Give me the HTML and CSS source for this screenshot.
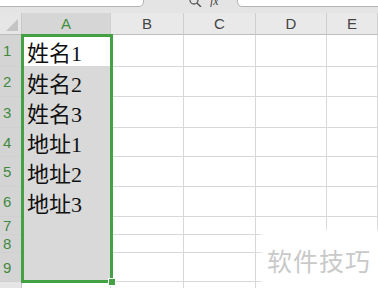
FILE: index.html
```html
<!DOCTYPE html>
<html lang="zh-CN">
<head>
    <meta charset="UTF-8">
    <title>表格</title>
    <link rel="stylesheet" href="styles.css">
</head>
<body>
    <div class="sheet">
        <div class="toolbar">
            <div class="namebox">A1</div>
            <div class="tools">
                <svg width="16" height="8" viewBox="0 0 16 8"><circle cx="6" cy="0" r="4" fill="none" stroke="#555" stroke-width="1.3"/><path d="M9 3 L13 7" stroke="#555" stroke-width="1.5"/></svg>
                <span class="fx">fx</span>
            </div>
            <div class="formula">姓名1</div>
        </div>

        <div class="grid">
            <div class="corner"><span class="tri"></span></div>
            <div class="colhead sel">A</div>
            <div class="colhead">B</div>
            <div class="colhead">C</div>
            <div class="colhead">D</div>
            <div class="colhead">E</div>

            <div class="rowhead sel">1</div><div class="cell active">姓名1</div><div class="cell"></div><div class="cell"></div><div class="cell"></div><div class="cell"></div>
            <div class="rowhead sel">2</div><div class="cell picked">姓名2</div><div class="cell"></div><div class="cell"></div><div class="cell"></div><div class="cell"></div>
            <div class="rowhead sel">3</div><div class="cell picked">姓名3</div><div class="cell"></div><div class="cell"></div><div class="cell"></div><div class="cell"></div>
            <div class="rowhead sel">4</div><div class="cell picked">地址1</div><div class="cell"></div><div class="cell"></div><div class="cell"></div><div class="cell"></div>
            <div class="rowhead sel">5</div><div class="cell picked">地址2</div><div class="cell"></div><div class="cell"></div><div class="cell"></div><div class="cell"></div>
            <div class="rowhead sel">6</div><div class="cell picked">地址3</div><div class="cell"></div><div class="cell"></div><div class="cell"></div><div class="cell"></div>
            <div class="rowhead sel">7</div><div class="cell picked"></div><div class="cell"></div><div class="cell"></div><div class="cell"></div><div class="cell"></div>
            <div class="rowhead sel">8</div><div class="cell picked"></div><div class="cell"></div><div class="cell"></div><div class="cell"></div><div class="cell"></div>
            <div class="rowhead sel">9</div><div class="cell picked"></div><div class="cell"></div><div class="cell"></div><div class="cell"></div><div class="cell"></div>
            <div class="rowhead">10</div><div class="cell"></div><div class="cell"></div><div class="cell"></div><div class="cell"></div><div class="cell"></div>

            <div class="selection"><span class="handle"></span></div>
        </div>

        <div class="watermark">软件技巧</div>
    </div>
</body>
</html>
```

FILE: styles.css
```css
body {
    margin: 0;
    background-color: #ffffff;
    font-family: "Liberation Sans", "Noto Sans CJK SC", sans-serif;
    overflow: hidden;
}
.sheet {
    position: relative;
    width: 378px;
    height: 288px;
    overflow: hidden;
}
.toolbar {
    height: 13px;
    background-color: #e4e4e4;
    display: flex;
    align-items: flex-end;
    overflow: hidden;
}
.namebox {
    width: 150px;
    height: 20px;
    margin: -7px 0 6px -6px;
    box-sizing: border-box;
    background-color: #ffffff;
    border: 1px solid #b4b4b4;
    border-radius: 0 0 5px 5px;
    padding-right: 20px;
    text-align: center;
    font-size: 14px;
    line-height: 12px;
    color: #333333;
}
.tools {
    display: flex;
    align-items: flex-start;
    gap: 6px;
    margin: 0 0 6px 44px;
    height: 7px;
    overflow: hidden;
    align-self: flex-start;
}
.fx {
    font-family: "Liberation Serif", serif;
    font-style: italic;
    font-size: 12px;
    line-height: 2px;
    color: #444444;
}
.formula {
    flex: 1;
    height: 20px;
    margin: -7px -6px 6px 18px;
    box-sizing: border-box;
    background-color: #ffffff;
    border: 1px solid #b4b4b4;
    border-radius: 0 0 0 5px;
    padding-left: 14px;
    font-family: "Liberation Serif", "Noto Sans CJK SC", serif;
    font-size: 16px;
    line-height: 8px;
    color: #222222;
}
.grid {
    position: relative;
    display: grid;
    grid-template-columns: 22px 89px 73px 72px 71px 51px;
    grid-template-rows: 22px 32px 30px 31px 29px 30px 30px 18px 18px 29px 30px;
}
.grid > div {
    box-sizing: border-box;
}
.corner {
    position: relative;
    background-color: #e6e6e6;
    border-right: 1px solid #c8c8c8;
    border-bottom: 1px solid #bdbdbd;
}
.tri {
    position: absolute;
    right: 3px;
    bottom: 3px;
    width: 0;
    height: 0;
    border-left: 12px solid transparent;
    border-bottom: 12px solid #c4c4c4;
}
.colhead {
    background-color: #e9e9e9;
    border-right: 1px solid #cfcfcf;
    border-bottom: 1px solid #bdbdbd;
    text-align: center;
    font-size: 15px;
    line-height: 22px;
    color: #444444;
}
.colhead.sel {
    background-color: #d6d6d6;
    color: #3e8e3e;
}
.rowhead {
    background-color: #e6e6e6;
    border-right: 1px solid #c4c4c4;
    border-bottom: 1px solid #d0d0d0;
    padding-left: 3px;
    font-size: 15px;
    color: #444444;
    display: flex;
    align-items: center;
}
.rowhead.sel {
    background-color: #d4d4d4;
    color: #3f8a3f;
}
.cell {
    border-right: 1px solid #d8d8d8;
    border-bottom: 1px solid #d8d8d8;
    padding-left: 5px;
    font-family: "Liberation Serif", "Noto Sans CJK SC", serif;
    font-size: 22px;
    color: #111111;
    display: flex;
    align-items: center;
}
.cell.picked {
    background-color: #d9d9d9;
}
.selection {
    position: absolute;
    left: 21px;
    top: 21px;
    width: 92px;
    height: 249px;
    box-sizing: border-box;
    border: 3px solid #43a043;
}
.handle {
    position: absolute;
    right: -6px;
    bottom: -6px;
    width: 6px;
    height: 6px;
    background-color: #43a043;
    border: 1px solid #ffffff;
}
.watermark {
    position: absolute;
    left: 263px;
    top: 232px;
    width: 120px;
    height: 60px;
    padding: 10px 0 0 4px;
    box-sizing: border-box;
    background-color: #ffffff;
    box-shadow: 0 0 4px 2px #ffffff;
    font-family: "Noto Sans CJK SC", sans-serif;
    font-size: 25px;
    letter-spacing: 1px;
    color: #c9c9c9;
}
```
